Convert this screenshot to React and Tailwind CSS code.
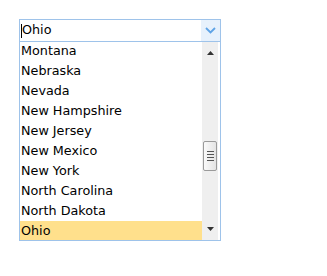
import React from "react";

const states = [
  "Montana",
  "Nebraska",
  "Nevada",
  "New Hampshire",
  "New Jersey",
  "New Mexico",
  "New York",
  "North Carolina",
  "North Dakota",
  "Ohio",
];

export default function App() {
  const selected = "Ohio";

  return (
    <div className="pt-[19px] pl-[19px] bg-white min-h-[276px] font-['DejaVu_Sans',sans-serif] text-[12.75px] text-black">
      <div className="w-[202px]">
        {/* input */}
        <div className="flex h-[23px] border border-[#9ec3ea] bg-white">
          <div className="flex-1 flex items-center pl-[1px]">
            <span className="w-px h-[14px] bg-black" />
            <span className="leading-none">{selected}</span>
          </div>
          <div className="w-[19px] flex items-center justify-center bg-[#e7f1fc]">
            <svg width="11" height="7" viewBox="0 0 11 7">
              <path d="M1 1 L5.5 5.5 L10 1" fill="none" stroke="#5ea3e6" strokeWidth="1.8" />
            </svg>
          </div>
        </div>

        {/* list */}
        <div className="flex h-[199px] border-x border-b border-[#9ec3ea] bg-white overflow-hidden">
          <ul className="flex-1 -mt-[1px]">
            {states.map((s) => (
              <li
                key={s}
                className={`h-[20px] flex items-center pl-[1px] ${s === selected ? "bg-[#ffe08c]" : ""}`}
              >
                {s}
              </li>
            ))}
          </ul>
          <div className="w-[16px] mr-[2px] bg-[#efefef] flex flex-col items-center justify-between py-[9px]">
            <svg width="7" height="4" viewBox="0 0 7 4">
              <path d="M3.5 0 L7 4 L0 4 Z" fill="#333" />
            </svg>
            <div className="flex-1 w-full flex flex-col justify-end pb-[56px]">
              <div className="h-[30px] mx-px border border-[#9a9a9a] rounded-[2px] bg-gradient-to-r from-[#fafafa] to-[#e4e4e4] flex flex-col items-center justify-center gap-[2px]">
                <span className="w-[7px] h-px bg-[#555]" />
                <span className="w-[7px] h-px bg-[#555]" />
                <span className="w-[7px] h-px bg-[#555]" />
                <span className="w-[7px] h-px bg-[#555]" />
              </div>
            </div>
            <svg width="7" height="4" viewBox="0 0 7 4">
              <path d="M0 0 L7 0 L3.5 4 Z" fill="#333" />
            </svg>
          </div>
        </div>
      </div>
    </div>
  );
}
